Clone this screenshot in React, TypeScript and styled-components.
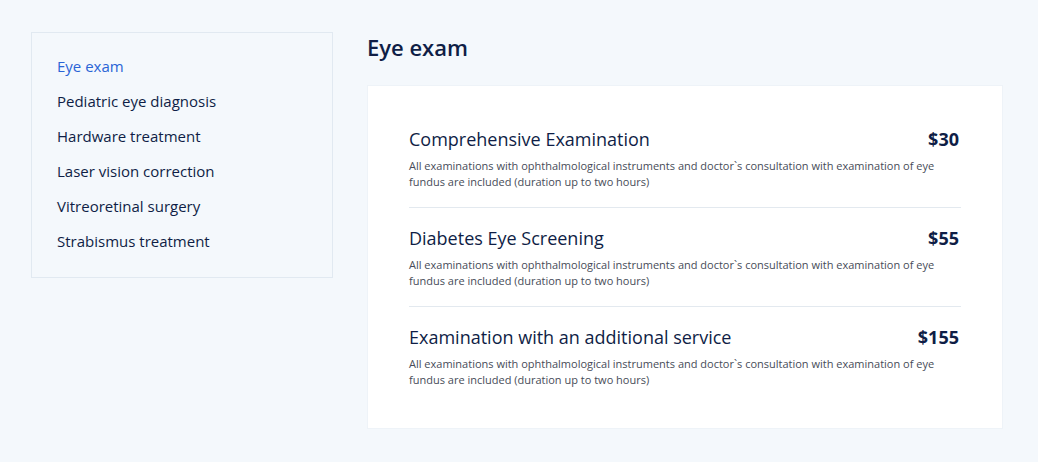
import React from "react";
import styled, { createGlobalStyle } from "styled-components";

const Global = createGlobalStyle`
  html, body { margin: 0; padding: 0; background: #f4f8fc; }
  body { font-family: "Open Sans", "Liberation Sans", sans-serif; color: #0f1e46; }
  * { box-sizing: border-box; }
`;

const Page = styled.div`
  display: flex;
  align-items: flex-start;
  gap: 34px;
  padding: 32px 35px 34px 31px;
  width: 1038px;
  min-height: 462px;
`;

const Sidebar = styled.nav`
  width: 302px;
  padding: 16px 25px 18px;
  border: 1px solid #e1e9f1;
  background: #f4f8fc;
  display: flex;
  flex-direction: column;
`;

const NavItem = styled.a<{ $active?: boolean }>`
  font-size: 15px;
  line-height: 35px;
  font-weight: 500;
  color: ${(p) => (p.$active ? "#2a64d6" : "#0f1e46")};
  text-decoration: none;
  cursor: pointer;
`;

const Main = styled.main`
  flex: 1;
  display: flex;
  flex-direction: column;
`;

const Heading = styled.h1`
  margin: 0;
  font-size: 22px;
  line-height: 30px;
  font-weight: 600;
  color: #0f1e46;
  height: 53px;
`;

const Panel = styled.section`
  background: #fff;
  border: 1px solid #eef3f8;
  padding: 40px 41px 40px;
  display: flex;
  flex-direction: column;
`;

const Item = styled.div`
  padding: 17px 0 17px;
  border-bottom: 1px solid #e3e9ef;
  &:first-child { padding-top: 0; }
  &:last-child { border-bottom: none; padding-bottom: 0; }
`;

const TitleRow = styled.div`
  display: flex;
  justify-content: space-between;
  align-items: center;
  padding-right: 2px;
`;

const Title = styled.h2`
  margin: 0;
  font-size: 18px;
  line-height: 26px;
  font-weight: 500;
  color: #0f1e46;
`;

const Price = styled.span`
  font-size: 18px;
  line-height: 26px;
  font-weight: 700;
  color: #0f1e46;
`;

const Desc = styled.p`
  margin: 6px 0 0;
  font-size: 11px;
  line-height: 16px;
  color: #474c58;
  max-width: 540px;
`;

const nav = [
  "Eye exam",
  "Pediatric eye diagnosis",
  "Hardware treatment",
  "Laser vision correction",
  "Vitreoretinal surgery",
  "Strabismus treatment",
];

const desc =
  "All examinations with ophthalmological instruments and doctor`s consultation with examination of eye fundus are included (duration up to two hours)";

const services = [
  { title: "Comprehensive Examination", price: "$30" },
  { title: "Diabetes Eye Screening", price: "$55" },
  { title: "Examination with an additional service", price: "$155" },
];

export default function App() {
  return (
    <>
      <Global />
      <Page>
        <Sidebar>
          {nav.map((n, i) => (
            <NavItem key={n} $active={i === 0}>
              {n}
            </NavItem>
          ))}
        </Sidebar>
        <Main>
          <Heading>Eye exam</Heading>
          <Panel>
            {services.map((s) => (
              <Item key={s.title}>
                <TitleRow>
                  <Title>{s.title}</Title>
                  <Price>{s.price}</Price>
                </TitleRow>
                <Desc>{desc}</Desc>
              </Item>
            ))}
          </Panel>
        </Main>
      </Page>
    </>
  );
}
